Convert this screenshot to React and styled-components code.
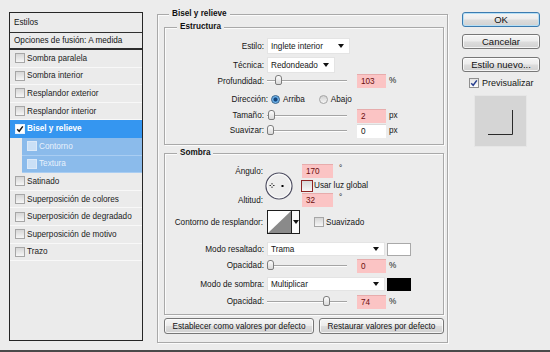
import React from 'react'
import styled, { createGlobalStyle } from 'styled-components'

const GlobalStyle = createGlobalStyle`
    html, body {
        margin: 0;
        padding: 0;
        background: #ececec;
    }
    body {
        font-family: "Liberation Sans", Arial, sans-serif;
        font-size: 8.2px;
        color: #151515;
    }
`

const EFFECTS = [
    { name: 'Sombra paralela' },
    { name: 'Sombra interior' },
    { name: 'Resplandor exterior' },
    { name: 'Resplandor interior' },
    { name: 'Bisel y relieve', checked: true, active: true },
    { name: 'Contorno', sub: true },
    { name: 'Textura', sub: true },
    { name: 'Satinado' },
    { name: 'Superposición de colores' },
    { name: 'Superposición de degradado' },
    { name: 'Superposición de motivo' },
    { name: 'Trazo' },
]

const Dialog = styled.div`
    width: 550px;
    height: 352px;
    box-sizing: border-box;
    display: flex;
    align-items: flex-start;
    gap: 14px;
    padding: 12px 0 0 9px;
    border-bottom: 2px solid #4a4a4a;
    background: #ececec;
    overflow: hidden;
`

/* ---------- left list ---------- */

const StyleList = styled.div`
    flex: none;
    width: 134px;
    height: 329px;
    box-sizing: border-box;
    border: 1px solid #262626;
    background: #ebebeb;
`

const ListHeader = styled.div`
    height: 19px;
    line-height: 19px;
    padding-left: 4px;
    border-bottom: 1px solid #303030;
`

const BlendRow = styled.div`
    height: 15px;
    line-height: 15px;
    padding-left: 4px;
    border-bottom: 2px solid #2c2c2c;
`

const EffectRow = styled.div`
    display: flex;
    align-items: center;
    gap: 1px;
    height: 17.6px;
    box-sizing: border-box;
    margin-left: ${p => (p.$sub ? 12 : 0)}px;
    padding-left: 5px;
    border-bottom: 1px solid ${p => (p.$active ? '#3596f0' : p.$sub ? '#a9cdf2' : '#f8f8f8')};
    background: ${p => (p.$active ? '#3596f0' : p.$sub ? '#8bbbeb' : 'transparent')};
    color: ${p => (p.$active ? '#fff' : p.$sub ? '#e8f1fb' : '#1b1b1b')};
    font-weight: ${p => (p.$active ? 'bold' : 'normal')};
    white-space: nowrap;
`

const Box = styled.span`
    flex: none;
    display: inline-flex;
    align-items: center;
    justify-content: center;
    width: ${p => p.$size || 10}px;
    height: ${p => p.$size || 10}px;
    box-sizing: border-box;
    border: 1px solid ${p => p.$ring || '#a6a6a6'};
    background: ${p => p.$fill || 'linear-gradient(#d6d6d6, #f6f6f6)'};
    margin-right: ${p => p.$gap || 1}px;
`

const Check = ({ color = '#1a1a1a' }) => (
    <svg width="8" height="8" viewBox="0 0 8 8">
        <path d="M1.2 4.2 L3.2 6.3 L6.8 1.4" fill="none" stroke={color} strokeWidth="1.5" />
    </svg>
)

/* ---------- main panel ---------- */

const Group = styled.fieldset`
    margin: ${p => p.$mt || 0}px 0 0;
    padding: 0;
    min-width: 0;
    box-sizing: border-box;
    border: 1px solid #a9a9a9;
    box-shadow: inset 1px 1px 0 #fbfbfb, 1px 1px 0 #fbfbfb;
`

const MainGroup = styled(Group)`
    flex: none;
    width: 291px;
    height: 331px;
`

const Legend = styled.legend`
    margin-left: ${p => p.$indent}px;
    padding: 0 3px;
    line-height: 4px;
    font-weight: bold;
    background: #ececec;
    color: #111;
`

const Inner = styled.div`
    padding: ${p => p.$pad};
`

const Row = styled.div`
    display: flex;
    align-items: center;
    height: ${p => p.$h || 16}px;
    margin-top: ${p => p.$mt || 0}px;
    white-space: nowrap;
`

const Label = styled.span`
    flex: none;
    width: ${p => p.$w || 99}px;
    padding-right: ${p => p.$pr || 0}px;
    box-sizing: border-box;
    text-align: right;
    margin-right: 3px;
`

const Select = styled.div`
    flex: none;
    display: flex;
    align-items: center;
    justify-content: space-between;
    width: ${p => p.$w}px;
    height: ${p => p.$h || 16}px;
    box-sizing: border-box;
    padding: 0 5px 0 3px;
    background: #fff;
    border: 1px solid #e4e4e4;
`

const Arrow = styled.span`
    width: 0;
    height: 0;
    border-left: 3.5px solid transparent;
    border-right: 3.5px solid transparent;
    border-top: 4px solid #111;
`

const Track = styled.div`
    flex: none;
    position: relative;
    width: 80px;
    height: 0;
    border-top: 1px solid #a4a4a4;
    border-bottom: 1px solid #fdfdfd;
`

const Thumb = styled.span`
    position: absolute;
    top: -6px;
    width: 7px;
    height: 10px;
    box-sizing: border-box;
    border: 1px solid #7d7d7d;
    border-radius: 3px 3px 2px 2px;
    background: linear-gradient(#fefefe, #d9d9d9);
`

const Num = styled.div`
    flex: none;
    width: ${p => p.$w || 29}px;
    height: 14px;
    line-height: 14px;
    box-sizing: border-box;
    margin-left: ${p => p.$ml || 0}px;
    padding-left: 4px;
    background: ${p => (p.$hot ? '#fbc4c4' : '#fff')};
    color: ${p => (p.$hot ? '#6a0d0d' : '#111')};
    border-top: 1px solid ${p => (p.$hot ? '#e7acac' : '#d9d9d9')};
`

const Unit = styled.span`
    margin-left: ${p => p.$ml || 3}px;
    align-self: ${p => (p.$top ? 'flex-start' : 'center')};
    line-height: 10px;
`

const Radio = styled.span`
    flex: none;
    width: 9px;
    height: 9px;
    box-sizing: border-box;
    border-radius: 50%;
    margin-left: ${p => p.$ml || 0}px;
    margin-right: 3px;
    border: 1px solid ${p => (p.$on ? '#2d5f8c' : '#a3a3a3')};
    background: ${p =>
        p.$on
            ? 'radial-gradient(circle, #17467a 0 1.6px, #5aa5e4 2.4px, #cfe9fb 100%)'
            : 'linear-gradient(#d2d2d2, #f5f5f5)'};
`

const AngleGrid = styled.div`
    display: grid;
    grid-template-columns: 100px 36px 1fr;
    grid-template-rows: 14px 15px 14px;
    white-space: nowrap;
`

const Cell = styled.div`
    display: flex;
    align-items: center;
    grid-column: ${p => p.$col};
    grid-row: ${p => p.$row};
    justify-content: ${p => (p.$end ? 'flex-end' : 'flex-start')};
    padding-right: ${p => (p.$end ? 2 : 0)}px;
`

const DialWrap = styled.div`
    grid-column: 2;
    grid-row: 1 / 4;
    align-self: center;
    width: 28px;
    height: 28px;
`

const Contour = styled.div`
    flex: none;
    display: flex;
    height: 24px;
    box-sizing: border-box;
    border: 1px solid #1e1e1e;
    margin-right: 14px;
`

const ContourDrop = styled.div`
    width: 7px;
    display: flex;
    align-items: center;
    justify-content: center;
    border-left: 1px solid #1e1e1e;
    background: #fafafa;
`

const Swatch = styled.div`
    flex: none;
    width: 24px;
    height: 13px;
    box-sizing: border-box;
    margin-left: 2px;
    border: 1px solid ${p => (p.$color === '#000' ? '#000' : '#a9a9a9')};
    background: ${p => p.$color};
`

const ButtonRow = styled.div`
    display: flex;
    justify-content: space-between;
    margin-top: 3px;
`

const Button = styled.button`
    font: inherit;
    font-size: ${p => p.$size || 8.2}px;
    height: ${p => p.$h || 16}px;
    width: ${p => (p.$w ? `${p.$w}px` : 'auto')};
    margin: ${p => p.$mt || 0}px 0 0;
    padding: 0;
    border: 1px solid ${p => (p.$primary ? '#3b7bb0' : '#777')};
    border-radius: 3px;
    color: #111;
    background: linear-gradient(#f5f5f5 0%, #ececec 48%, #dddddd 52%, #d1d1d1 100%);
    box-shadow: inset 0 0 0 1px ${p => (p.$primary ? '#b6dff5' : 'rgba(255,255,255,.75)')};
    white-space: nowrap;
`

/* ---------- right column ---------- */

const Side = styled.div`
    flex: none;
    width: 78px;
    display: flex;
    flex-direction: column;
    align-items: flex-start;
`

const PreviewToggle = styled.div`
    display: flex;
    align-items: center;
    height: 12px;
    margin: 5px 0 0 7px;
    font-size: 9px;
`

const Preview = styled.div`
    width: 53px;
    height: 52px;
    box-sizing: border-box;
    margin: 6px 0 0 12px;
    border: 1px solid #e6e6e6;
    background: #d5d5d5;
`

const Slider = ({ value, max }) => (
    <Track>
        <Thumb style={{ left: `${Math.round((value / max) * 76)}px` }} />
    </Track>
)

const Dial = () => (
    <DialWrap>
        <svg width="28" height="28" viewBox="0 0 28 28">
            <circle cx="14" cy="14" r="13" fill="#ededed" stroke="#4c4c60" strokeWidth="1.2" />
            <circle cx="14" cy="14" r="11.8" fill="none" stroke="#fff" strokeWidth="0.8" />
            <path d="M4.5 13.5 H6 M8 13.5 H9.5 M7 11 V12.5 M7 14.5 V16" stroke="#333" strokeWidth="1" />
            <rect x="16.5" y="13" width="2" height="2" fill="#000" />
        </svg>
    </DialWrap>
)

const ContourPicker = () => (
    <Contour>
        <svg width="23" height="22" viewBox="0 0 23 22">
            <rect width="23" height="22" fill="#fff" />
            <polygon points="0,22 23,0 23,22" fill="#8a8a8a" />
        </svg>
        <ContourDrop>
            <Arrow />
        </ContourDrop>
    </Contour>
)

const App = () => (
    <>
        <GlobalStyle />
        <Dialog>
            <StyleList>
                <ListHeader>Estilos</ListHeader>
                <BlendRow>Opciones de fusión: A medida</BlendRow>
                {EFFECTS.map(fx => (
                    <EffectRow key={fx.name} $active={fx.active} $sub={fx.sub}>
                        <Box
                            $fill={fx.active ? '#fff' : fx.sub ? 'rgba(255,255,255,.55)' : undefined}
                            $ring={fx.active ? '#e8f2fc' : fx.sub ? '#dbe9f8' : undefined}
                        >
                            {fx.checked && <Check />}
                        </Box>
                        {fx.name}
                    </EffectRow>
                ))}
            </StyleList>

            <MainGroup>
                <Legend $indent={11}>Bisel y relieve</Legend>
                <Inner $pad="9px 3px 0 6px">
                    <Group>
                        <Legend $indent={12}>Estructura</Legend>
                        <Inner $pad="9px 0 6px 0">
                            <Row>
                                <Label>Estilo:</Label>
                                <Select $w={83}>Inglete interior<Arrow /></Select>
                            </Row>
                            <Row $mt={3}>
                                <Label>Técnica:</Label>
                                <Select $w={68}>Redondeado<Arrow /></Select>
                            </Row>
                            <Row>
                                <Label>Profundidad:</Label>
                                <Slider value={103} max={1000} />
                                <Num $hot $ml={10}>103</Num>
                                <Unit>%</Unit>
                            </Row>
                            <Row $h={18} $mt={1}>
                                <Label $w={103}>Dirección:</Label>
                                <Radio $on />Arriba
                                <Radio $ml={14} />Abajo
                            </Row>
                            <Row $h={15}>
                                <Label>Tamaño:</Label>
                                <Slider value={2} max={250} />
                                <Num $hot $ml={10}>2</Num>
                                <Unit>px</Unit>
                            </Row>
                            <Row $h={15}>
                                <Label>Suavizar:</Label>
                                <Slider value={0} max={16} />
                                <Num $ml={10}>0</Num>
                                <Unit>px</Unit>
                            </Row>
                        </Inner>
                    </Group>

                    <Group $mt={6}>
                        <Legend $indent={12}>Sombra</Legend>
                        <Inner $pad="9px 0 5px 0">
                            <AngleGrid>
                                <Cell $col={1} $row={1} $end>Ángulo:</Cell>
                                <Dial />
                                <Cell $col={3} $row={1}>
                                    <Num $hot $w={31} $ml={1}>170</Num>
                                    <Unit $ml={6} $top>°</Unit>
                                </Cell>
                                <Cell $col={3} $row={2}>
                                    <Box $size={12} $ring="#8e2424" $gap={0}
                                        $fill="linear-gradient(#d8d8d8, #f7f7f7)" />
                                    Usar luz global
                                </Cell>
                                <Cell $col={1} $row={3} $end>Altitud:</Cell>
                                <Cell $col={3} $row={3}>
                                    <Num $hot $w={31} $ml={1}>32</Num>
                                    <Unit $ml={6} $top>°</Unit>
                                </Cell>
                            </AngleGrid>
                            <Row $h={24} $mt={3}>
                                <Label $pr={1}>Contorno de resplandor:</Label>
                                <ContourPicker />
                                <Box $gap={2} />Suavizado
                            </Row>
                            <Row $h={14} $mt={8}>
                                <Label>Modo resaltado:</Label>
                                <Select $w={118} $h={14}>Trama<Arrow /></Select>
                                <Swatch $color="#fff" />
                            </Row>
                            <Row $h={15} $mt={2}>
                                <Label>Opacidad:</Label>
                                <Slider value={0} max={100} />
                                <Num $hot $ml={10}>0</Num>
                                <Unit>%</Unit>
                            </Row>
                            <Row $h={14} $mt={4}>
                                <Label>Modo de sombra:</Label>
                                <Select $w={118} $h={14}>Multiplicar<Arrow /></Select>
                                <Swatch $color="#000" />
                            </Row>
                            <Row $h={15} $mt={3}>
                                <Label>Opacidad:</Label>
                                <Slider value={74} max={100} />
                                <Num $hot $ml={10}>74</Num>
                                <Unit>%</Unit>
                            </Row>
                        </Inner>
                    </Group>

                    <ButtonRow>
                        <Button $w={150}>Establecer como valores por defecto</Button>
                        <Button $w={125}>Restaurar valores por defecto</Button>
                    </ButtonRow>
                </Inner>
            </MainGroup>

            <Side>
                <Button $primary $w={78} $h={15} $size={9.5}>OK</Button>
                <Button $w={78} $h={15} $size={9.5} $mt={7}>Cancelar</Button>
                <Button $w={78} $h={15} $size={9.5} $mt={8}>Estilo nuevo...</Button>
                <PreviewToggle>
                    <Box $gap={3} $fill="linear-gradient(#e4e4e4, #fdfdfd)" $ring="#8f8f8f">
                        <Check color="#283f8f" />
                    </Box>
                    Previsualizar
                </PreviewToggle>
                <Preview>
                    <svg width="51" height="50" viewBox="0 0 51 50">
                        <path d="M37.5 14 V38.5 H13" fill="none" stroke="#2a2a2a" strokeWidth="1" />
                    </svg>
                </Preview>
            </Side>
        </Dialog>
    </>
)

export default App
